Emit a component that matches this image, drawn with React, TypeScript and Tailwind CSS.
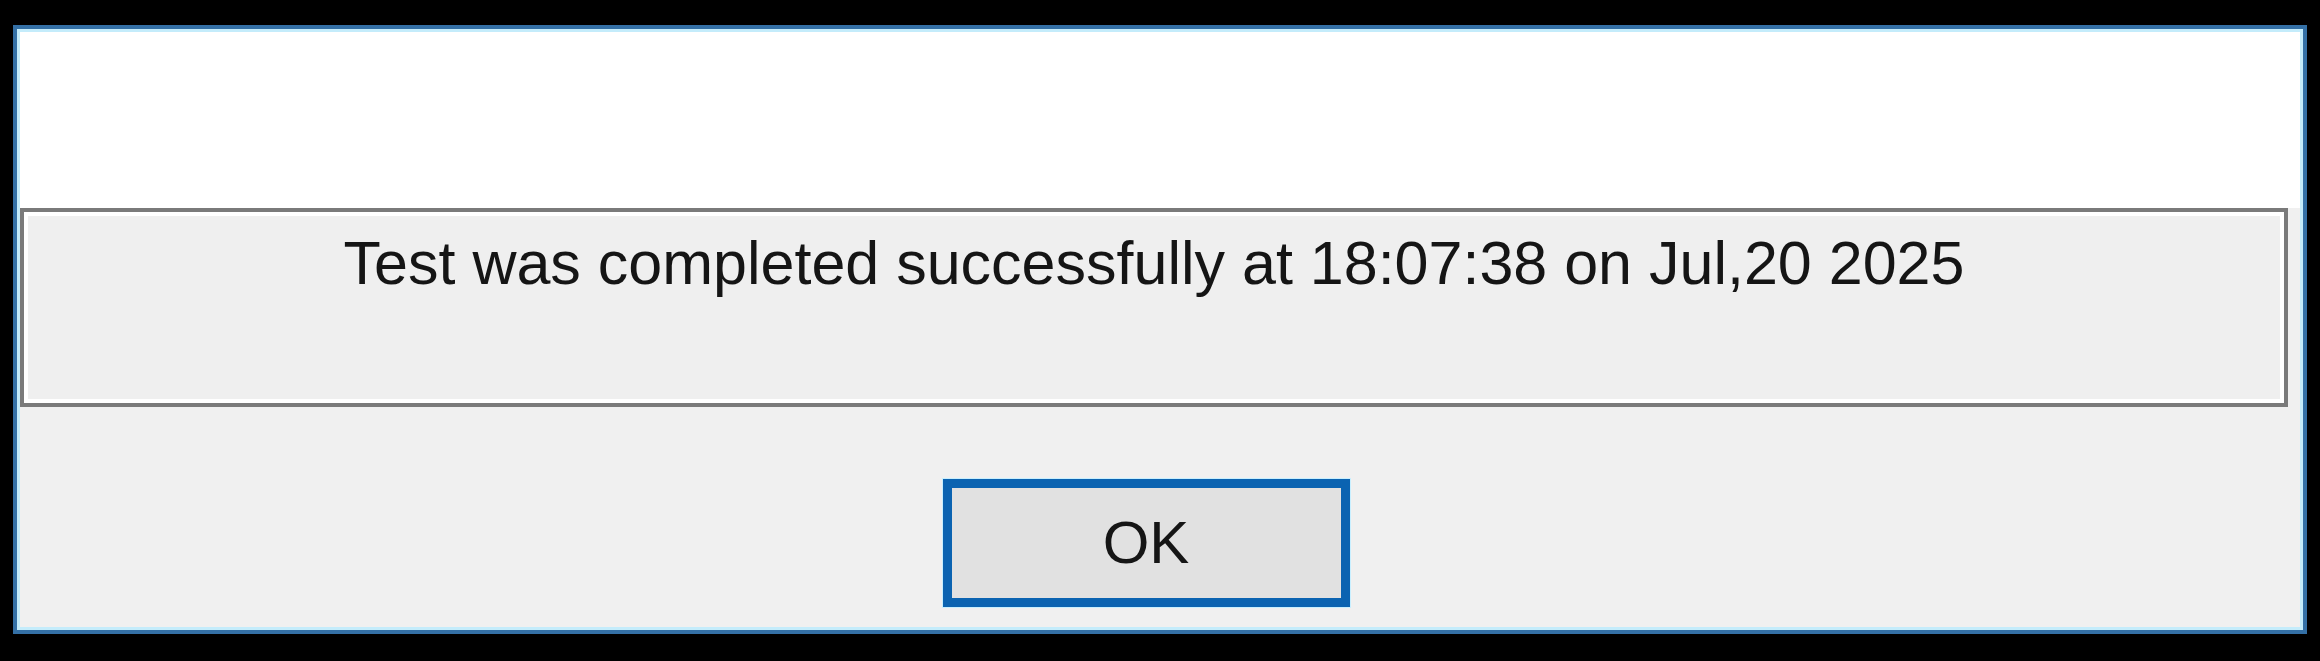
export default function App() {
  return (
    <div className="w-[2320px] h-[661px] bg-black pt-[25px] px-[13px] pb-[27px] flex font-['Liberation_Sans',Arial,sans-serif]">
      {/* Window frame */}
      <div className="flex-1 flex border-4 border-[#3470a6]">
        <div className="flex-1 flex flex-col border-[3px] border-[#c4ecfb] bg-[#f0f0f0]">
          {/* Top white panel */}
          <div className="h-[176px] bg-white shrink-0" />

          {/* Message group box */}
          <div className="h-[199px] mr-[12px] shrink-0 border-4 border-[#7a7a7a]">
            <div className="h-full border-4 border-white bg-[#efefef] pt-[17px] text-center">
              <p className="text-[61px] leading-none text-[#151515]">
                Test was completed successfully at 18:07:38 on Jul,20 2025
              </p>
            </div>
          </div>

          {/* Button row */}
          <div className="flex-1 flex justify-center pt-[71px] pr-[28px]">
            <button className="w-[409px] h-[130px] border border-[#c8efff] bg-[#e1e1e1]">
              <div className="h-full border-[9px] border-[#0b63b1] flex items-center justify-center">
                <span className="text-[60px] leading-none text-[#151515]">OK</span>
              </div>
            </button>
          </div>
        </div>
      </div>
    </div>
  );
}
